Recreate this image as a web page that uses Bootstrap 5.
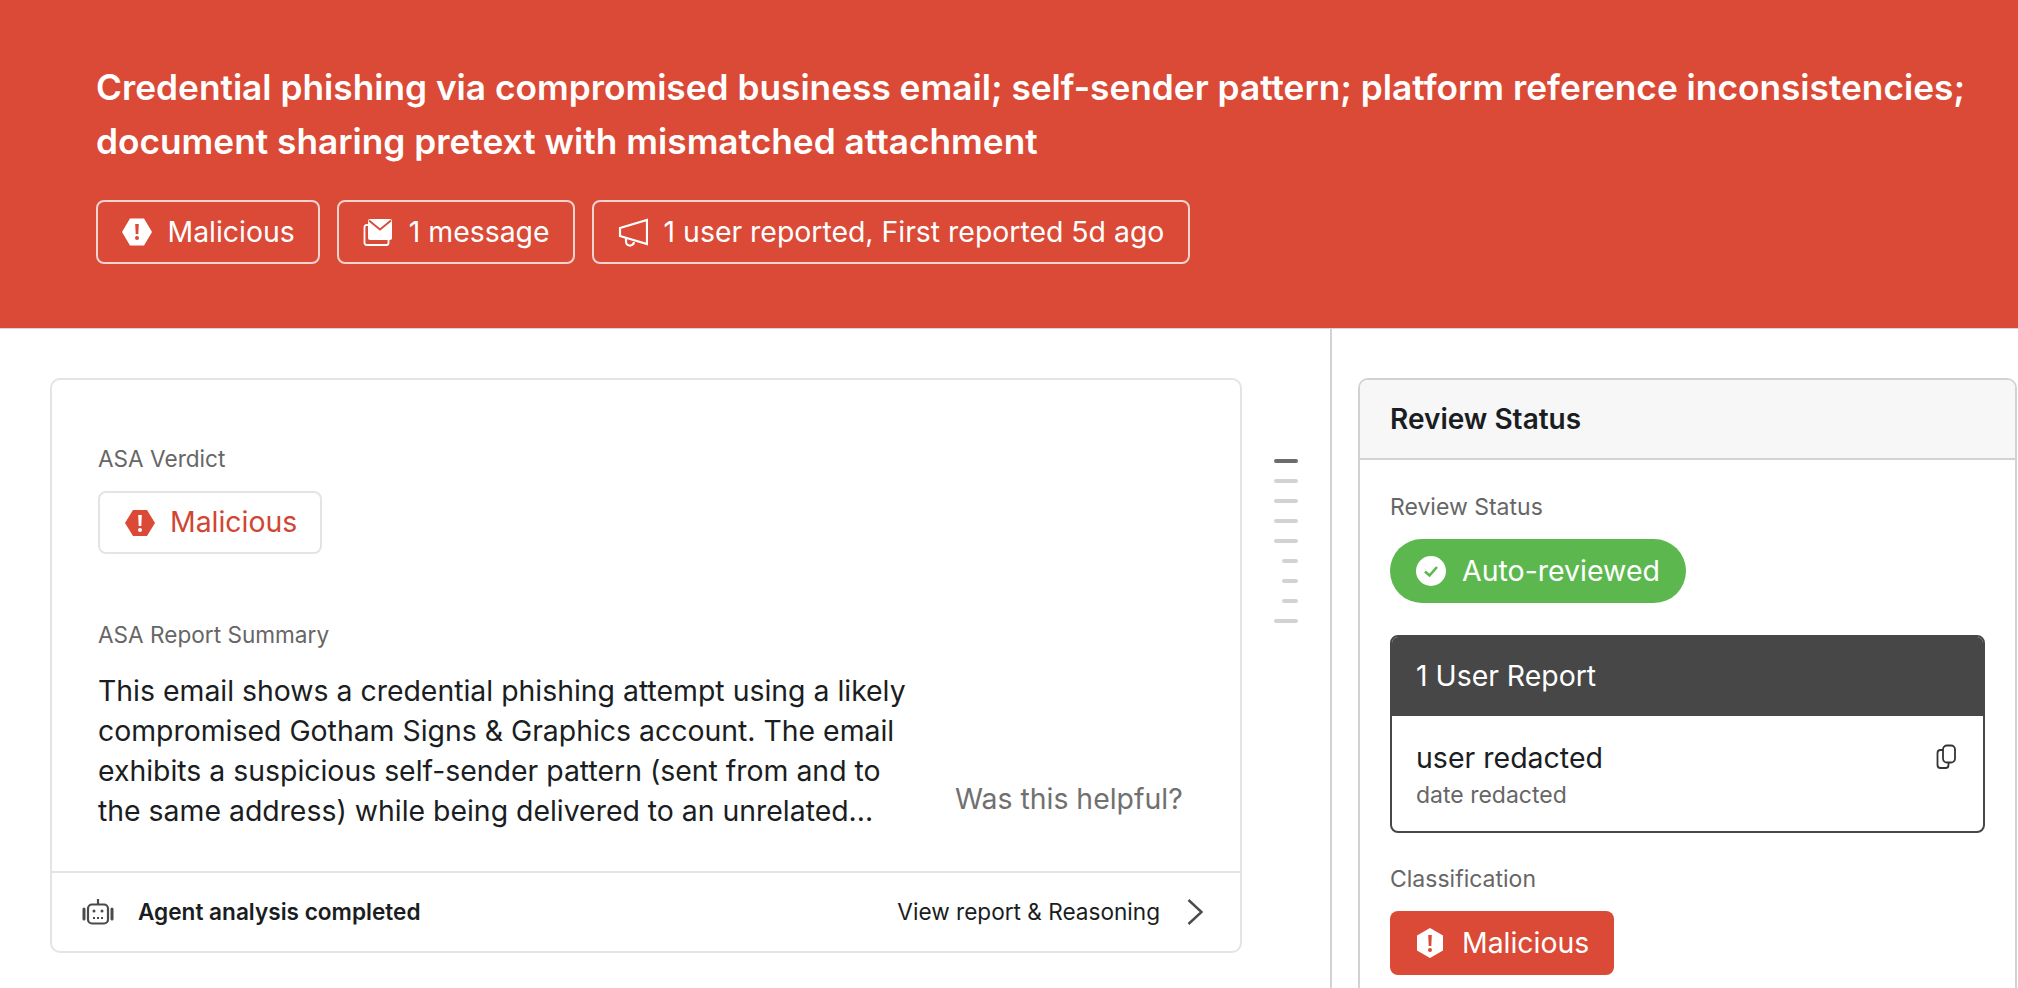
<!DOCTYPE html>
<html lang="en">

<head>
    <meta charset="UTF-8">
    <title>Threat Detail</title>
    <link href="https://cdn.jsdelivr.net/npm/bootstrap@5.3.3/dist/css/bootstrap.min.css" rel="stylesheet">
    <style>
        html, body { height: 988px; overflow: hidden; }
        body { font-family: Inter, "Liberation Sans", sans-serif; color: #1a1d21; background: #fff; }

        .threat-head { height: 329px; background: #db4a36; color: #fff; border-bottom: 1px solid #d5d5d5; padding: 61px 0 0 96px; }
        .threat-title { font-size: 35.25px; line-height: 54px; font-weight: 600; margin: 0 0 31px; white-space: nowrap; }
        .head-chip { height: 64px; padding: 0 23.5px; border: 2px solid #f3d3ce; border-radius: 8px; font-size: 28.4px; gap: 16px; }
        .chip-row { gap: 17px; }

        .main-area { height: 659px; overflow: hidden; }
        .left-pane { width: 1332px; height: 659px; border-right: 2px solid #d2d2d2; padding: 49px 32px 0 50px; gap: 32px; }
        .summary-box { width: 1192px; height: 575px; border: 2px solid #e4e4e4; border-radius: 10px; }
        .summary-body { padding: 64px 46px 0 46px; }
        .field-label { font-size: 22.6px; line-height: 30px; color: #666; }
        .verdict-chip { width: 224px; height: 63px; margin-top: 17px; border: 2px solid #e4e4e4; border-radius: 8px; color: #cf4634; font-size: 28.4px; gap: 15px; padding-left: 25px; }
        .report-label { margin-top: 66px; }
        .summary-row { margin-top: 21px; }
        .summary-text { width: 825px; font-size: 28.4px; line-height: 40px; margin: 0; }
        .helpful-text { font-size: 28.4px; line-height: 40px; color: #707070; margin: 0 0 12px 32px; white-space: nowrap; }
        .summary-foot { height: 80px; border-top: 2px solid #e4e4e4; padding: 0 37px 0 30px; font-size: 22.6px; }
        .agent-text { font-weight: 600; margin-left: 24px; }
        .report-link { margin-right: 27px; }

        .tick-list { width: 24px; padding-top: 81px; gap: 16px; }
        .tick-mark { width: 24px; height: 4px; border-radius: 2px; background: #d2d2d2; }
        .tick-mark.tick-on { background: #6c6c6c; }
        .tick-mark.tick-short { width: 16px; }

        .right-pane { padding: 49px 0 0 26px; width: 685px; }
        .status-box { width: 659px; height: 610px; border: 2px solid #d2d2d2; border-bottom: 0; border-radius: 10px 10px 0 0; }
        .status-head { height: 80px; background: #f7f7f8; border-bottom: 2px solid #d2d2d2; padding-left: 30px; font-size: 28px; font-weight: 600; border-radius: 8px 8px 0 0; }
        .status-body { padding: 32px 30px 0 30px; }
        .status-body .field-label { font-size: 23px; }
        .auto-pill { width: 296px; height: 64px; margin-top: 17px; background: #5cb84e; color: #fff; border-radius: 32px; font-size: 28.5px; gap: 16px; padding-left: 26px; }
        .report-box { width: 595px; height: 198px; margin-top: 32px; border: 2px solid #474747; border-radius: 8px; overflow: hidden; }
        .report-head { height: 80px; background: #474747; color: #fff; font-size: 28.4px; padding-left: 25px; margin: -1px -1px 0; }
        .report-body { padding: 23px 27px 0 24px; }
        .report-user { font-size: 28.5px; line-height: 38px; }
        .report-when { margin-top: 3px; }
        .class-label { margin-top: 31px; }
        .class-chip { width: 224px; height: 64px; margin-top: 17px; background: #db4a36; color: #fff; border-radius: 8px; font-size: 28.4px; gap: 18px; padding-left: 26px; }
        .copy-icon { margin-top: 5px; }
    </style>
</head>

<body>
    <div class="threat-head">
        <h1 class="threat-title">Credential phishing via compromised business email; self-sender pattern; platform reference inconsistencies;<br>document sharing pretext with mismatched attachment</h1>
        <div class="d-flex chip-row">
            <div class="head-chip d-flex align-items-center">
                <svg width="30" height="30" viewBox="0 0 30 30"><path fill="#fff" d="M8 1.5h14L30 15l-8 13.5H8L0 15z"/><path fill="#db4a36" d="M13.200 7h3.600l-.5 10h-2.600z"/><circle fill="#db4a36" cx="15" cy="21" r="2"/></svg>
                <span>Malicious</span>
            </div>
            <div class="head-chip d-flex align-items-center">
                <svg width="30" height="30" viewBox="0 0 30 30"><rect x="1.500" y="8" width="24" height="20" rx="2" fill="none" stroke="#fff" stroke-width="1.800"/><rect x="5" y="2" width="24" height="21" rx="2" fill="#fff"/><path d="M6 3.500l11 9 11-9" fill="none" stroke="#db4a36" stroke-width="1.800"/></svg>
                <span>1 message</span>
            </div>
            <div class="head-chip d-flex align-items-center">
                <svg width="30" height="30" viewBox="0 0 30 30" fill="none" stroke="#fff" stroke-width="2.200"><path d="M29 3v24L2 19v-8z"/><path d="M8 21v3a4 4 0 0 0 8 1"/></svg>
                <span>1 user reported, First reported 5d ago</span>
            </div>
        </div>
    </div>

    <div class="main-area d-flex">
        <div class="left-pane d-flex">
            <div class="summary-box d-flex flex-column flex-shrink-0">
                <div class="summary-body flex-grow-1">
                    <div class="field-label">ASA Verdict</div>
                    <div class="verdict-chip d-flex align-items-center">
                        <svg width="30" height="28" viewBox="0 0 30 28"><path fill="#db4a36" d="M8 1h14l8 13-8 13H8L0 14z"/><path fill="#fff" d="M13.200 6h3.600l-.5 11h-2.600z"/><circle fill="#fff" cx="15" cy="21" r="2"/></svg>
                        <span>Malicious</span>
                    </div>
                    <div class="field-label report-label">ASA Report Summary</div>
                    <div class="summary-row d-flex align-items-end">
                        <p class="summary-text flex-shrink-0">This email shows a credential phishing attempt using a likely compromised Gotham Signs &amp; Graphics account. The email exhibits a suspicious self-sender pattern (sent from and to the same address) while being delivered to an unrelated...</p>
                        <span class="helpful-text">Was this helpful?</span>
                    </div>
                </div>
                <div class="summary-foot d-flex align-items-center">
                    <svg width="32" height="26" viewBox="0 0 32 26" fill="none" stroke="#4a4a4a" stroke-width="2.200"><rect x="6" y="5.500" width="20" height="19" rx="4"/><path d="M16 0v5"/><path d="M2 10v10M30 10v10" stroke-width="3" stroke-linecap="round"/><circle cx="12" cy="12" r="1.500" fill="#4a4a4a" stroke="none"/><circle cx="20" cy="12" r="1.500" fill="#4a4a4a" stroke="none"/><path d="M11 19h10" stroke-dasharray="2 2" stroke-width="1.800"/></svg>
                    <span class="agent-text">Agent analysis completed</span>
                    <span class="report-link ms-auto">View report &amp; Reasoning</span>
                    <svg width="16" height="26" viewBox="0 0 16 26" fill="none" stroke="#4a4a4a" stroke-width="2.400"><path d="M1.500 1l13 12-13 12"/></svg>
                </div>
            </div>
            <div class="tick-list d-flex flex-column align-items-end flex-shrink-0">
                <div class="tick-mark tick-on"></div>
                <div class="tick-mark"></div>
                <div class="tick-mark"></div>
                <div class="tick-mark"></div>
                <div class="tick-mark"></div>
                <div class="tick-mark tick-short"></div>
                <div class="tick-mark tick-short"></div>
                <div class="tick-mark tick-short"></div>
                <div class="tick-mark"></div>
            </div>
        </div>

        <div class="right-pane flex-shrink-0">
            <div class="status-box">
                <div class="status-head d-flex align-items-center">Review Status</div>
                <div class="status-body">
                    <div class="field-label">Review Status</div>
                    <div class="auto-pill d-flex align-items-center">
                        <svg width="30" height="30" viewBox="0 0 30 30"><circle cx="15" cy="15" r="15" fill="#fff"/><path d="M9 15.500l4.500 4L21 11" fill="none" stroke="#5cb84e" stroke-width="2.600"/></svg>
                        <span>Auto-reviewed</span>
                    </div>
                    <div class="report-box">
                        <div class="report-head d-flex align-items-center">1 User Report</div>
                        <div class="report-body d-flex justify-content-between">
                            <div>
                                <div class="report-user">user redacted</div>
                                <div class="field-label report-when">date redacted</div>
                            </div>
                            <svg class="copy-icon" width="20" height="26" viewBox="0 0 20 26" fill="none" stroke="#333" stroke-width="1.800"><rect x="7" y="1.500" width="12" height="17" rx="4"/><path d="M7 6H4.500Q1.500 6 1.500 9v12q0 3 3 3h5q3 0 3-3v-2.500"/></svg>
                        </div>
                    </div>
                    <div class="field-label class-label">Classification</div>
                    <div class="class-chip d-flex align-items-center">
                        <svg width="28" height="30" viewBox="0 0 28 30"><path fill="#fff" d="M14 0l13 7.500v15L14 30 1 22.500v-15z"/><path fill="#db4a36" d="M12.200 7h3.600l-.5 11h-2.600z"/><circle fill="#db4a36" cx="14" cy="22" r="2"/></svg>
                        <span>Malicious</span>
                    </div>
                </div>
            </div>
        </div>
    </div>

    <script src="https://cdn.jsdelivr.net/npm/bootstrap@5.3.3/dist/js/bootstrap.bundle.min.js"></script>
</body>

</html>
